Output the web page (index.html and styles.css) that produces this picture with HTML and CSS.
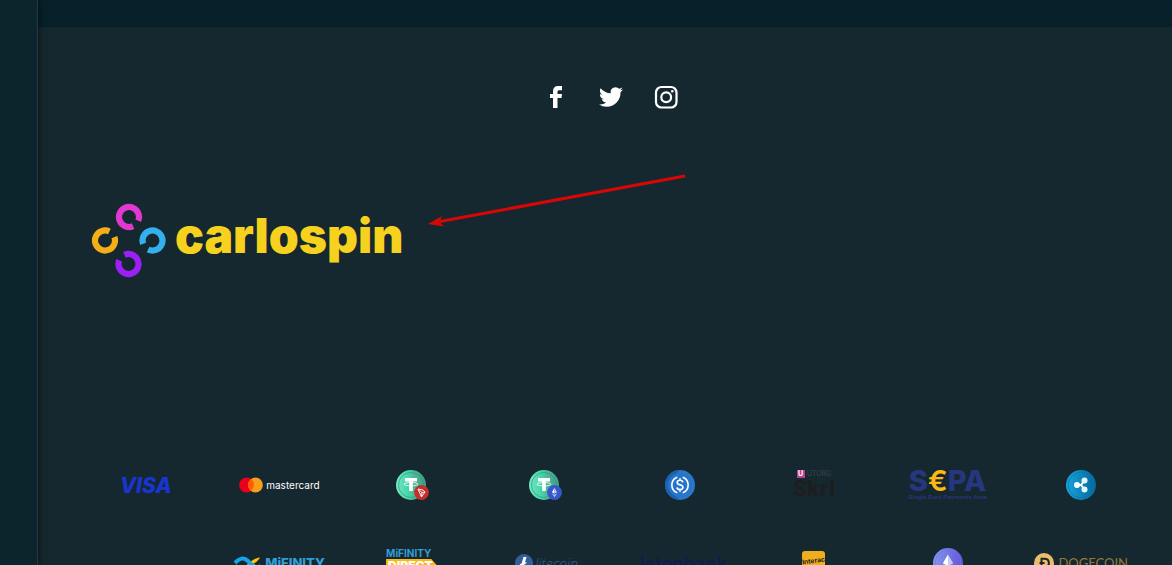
FILE: index.html
```html
<!DOCTYPE html>
<html lang="en">
<head>
  <meta charset="UTF-8" />
  <meta name="viewport" content="width=device-width, initial-scale=1.0"/>
  <title>Carlospin</title>
  <link rel="stylesheet" href="styles.css">
</head>
<body>

  <aside class="sidebar"></aside>

  <div class="page">
    <div class="topbar"></div>

    <footer class="footer">
      <nav class="social">
        <a href="#" aria-label="Facebook">
          <svg width="24" height="24" viewBox="0 0 24 24"><path fill="#fff" d="M9 23V13H6V9h3V6.200C9 3 10.800 1 14 1h4v4.200h-2.600c-1.500 0-1.900.6-1.900 1.800v2H18l-.5 4h-4v10z"/></svg>
        </a>
        <a href="#" aria-label="Twitter">
          <svg width="24" height="24" viewBox="0 0 24 24"><path fill="#fff" d="M23.950 4.570a10 10 0 0 1-2.820.77 4.960 4.960 0 0 0 2.160-2.720c-.95.55-2 .95-3.130 1.180a4.920 4.920 0 0 0-8.380 4.480C7.690 8.090 4.070 6.130 1.640 3.160a4.820 4.820 0 0 0-.67 2.480c0 1.710.87 3.210 2.190 4.100a4.900 4.900 0 0 1-2.230-.62v.06a4.920 4.920 0 0 0 3.950 4.830 5 5 0 0 1-2.210.08 4.940 4.940 0 0 0 4.600 3.420A9.870 9.870 0 0 1 0 19.540a14 14 0 0 0 7.550 2.210c9.050 0 14-7.500 14-13.980 0-.21 0-.42-.02-.63a9.940 9.940 0 0 0 2.420-2.570z"/></svg>
        </a>
        <a href="#" aria-label="Instagram">
          <svg width="24" height="24" viewBox="0 0 24 24" fill="none" stroke="#fff" stroke-width="2.200"><rect x="2" y="2" width="20.500" height="20.500" rx="5.500"/><circle cx="12.200" cy="12.200" r="4.900"/><circle cx="18.300" cy="6.200" r="1.300" fill="#fff" stroke="none"/></svg>
        </a>
      </nav>

      <a href="#" class="logo">
        <svg width="76" height="76" viewBox="0 0 76 76" fill="none" stroke-width="6.200" stroke-dasharray="54.800 8.200">
          <circle cx="38" cy="14" r="10" stroke="#e238cf" transform="rotate(66 38 14)"/>
          <circle cx="14" cy="37.500" r="10" stroke="#f3ae18" transform="rotate(-20 14 37.500)"/>
          <circle cx="61.500" cy="37.500" r="10" stroke="#34b0ee" transform="rotate(160 61.500 37.500)"/>
          <circle cx="37.500" cy="61" r="10" stroke="#9b1ff6" transform="rotate(246 37.500 61)"/>
        </svg>
        <span>carlospin</span>
      </a>

      <svg class="arrow" width="262" height="56" viewBox="0 0 262 56">
        <path d="M14 49.500L259 4" stroke="#d90606" stroke-width="3" fill="none"/>
        <path d="M2 52L16 44L13.500 49.700L18 54.500Z" fill="#d90606"/>
      </svg>

      <ul class="payments">
        <li><span class="visa">VISA</span></li>
        <li class="mastercard">
          <svg width="24" height="16" viewBox="0 0 24 16">
            <circle cx="7.500" cy="8" r="7.400" fill="#eb001b"/>
            <circle cx="16.500" cy="8" r="7.400" fill="#f79e1b"/>
            <path d="M12 2.100a7.400 7.400 0 0 1 0 11.800a7.400 7.400 0 0 1 0-11.800z" fill="#ff5f00"/>
          </svg>
          <span>mastercard</span>
        </li>
        <li>
          <svg width="35" height="30" viewBox="0 0 35 30">
            <defs>
              <linearGradient id="tether"><stop offset="0" stop-color="#74e8c4"/><stop offset=".5" stop-color="#3ecfa4"/><stop offset=".55" stop-color="#55b99c"/><stop offset="1" stop-color="#3f9e84"/></linearGradient>
            </defs>
            <circle cx="15" cy="15" r="15" fill="url(#tether)"/>
            <circle cx="15" cy="15" r="12.500" fill="none" stroke="#2e9a7b" stroke-width=".7"/>
            <path d="M9 8h12v3.500h-4.200v9.500h-3.600v-9.500H9z" fill="#fff"/>
            <ellipse cx="15" cy="14.200" rx="7" ry="1.700" fill="none" stroke="#fff" stroke-width=".8"/>
            <circle cx="25.500" cy="22.500" r="7.400" fill="#c3302d"/>
            <path d="M22 19l5 1 2 2-3.500 5zM22 19l4 3.500 3-.5M26 22.500l-.5 4" fill="none" stroke="#fff" stroke-width=".9"/>
          </svg>
        </li>
        <li>
          <svg width="35" height="30" viewBox="0 0 35 30">
            <circle cx="15" cy="15" r="15" fill="url(#tether)"/>
            <circle cx="15" cy="15" r="12.500" fill="none" stroke="#2e9a7b" stroke-width=".7"/>
            <path d="M9 8h12v3.500h-4.200v9.500h-3.600v-9.500H9z" fill="#fff"/>
            <ellipse cx="15" cy="14.200" rx="7" ry="1.700" fill="none" stroke="#fff" stroke-width=".8"/>
            <circle cx="25.500" cy="22.500" r="7.400" fill="#3658c8"/>
            <path d="M25.500 17.800l-2.600 4.500 2.600 1.500z" fill="#fff"/>
            <path d="M25.500 17.800l2.600 4.500-2.600 1.500zM22.900 23.400l2.600 3.900 2.600-3.900-2.600 1.400z" fill="#b8c6f2"/>
          </svg>
        </li>
        <li>
          <svg width="30" height="30" viewBox="0 0 30 30">
            <circle cx="15" cy="15" r="15" fill="#2b78cb"/>
            <path d="M15 0a15 15 0 0 0 0 30l-6-6a11 11 0 0 1 0-18z" fill="#1c61ad"/>
            <circle cx="15" cy="15" r="12" fill="#2775ca"/>
            <path d="M12.300 7.200a8.300 8.300 0 0 0 0 15.600M17.700 7.200a8.300 8.300 0 0 1 0 15.600" fill="none" stroke="#fff" stroke-width="1.600"/>
            <path d="M17.800 12.300c-.2-1.300-1.200-2-2.800-2-1.700 0-2.800.8-2.800 2.100 0 3.200 5.700 1.700 5.700 4.900 0 1.400-1.100 2.300-2.900 2.300s-2.900-.8-3-2.200M15 8.300v2M15 19.500v2.200" fill="none" stroke="#fff" stroke-width="1.600"/>
          </svg>
        </li>
        <li class="skrill">
          <span class="utorg"><b>U</b>UTORG</span>
          <span>Skrl</span>
        </li>
        <li class="sepa">
          <span class="sepa-name">S<i>€</i>PA</span>
          <span class="sepa-note">Single Euro Payments Area</span>
        </li>
        <li>
          <svg width="30" height="30" viewBox="0 0 30 30">
            <defs>
              <linearGradient id="ripple"><stop offset="0" stop-color="#16a5dd"/><stop offset="1" stop-color="#03669b"/></linearGradient>
            </defs>
            <circle cx="15" cy="15" r="15" fill="url(#ripple)"/>
            <circle cx="15" cy="15" r="12.800" fill="none" stroke="#0b74a8" stroke-width=".7"/>
            <path d="M11 15h4l3.500-4.500M15 15l3.500 4.500" fill="none" stroke="#fff" stroke-width="2"/>
            <circle cx="11" cy="15" r="3" fill="#fff"/>
            <circle cx="18.500" cy="10.500" r="3" fill="#e4f2fa"/>
            <circle cx="18.500" cy="19.500" r="3" fill="#e4f2fa"/>
          </svg>
        </li>

        <li class="mifinity">
          <svg width="28" height="14" viewBox="0 0 28 14" fill="none">
            <path d="M12 10c4-4 7-7.500 14-8.500-2 4-6 6-11 9" fill="#ffc20e"/>
            <path d="M1 7c4-5 9-6 13-2 4 5 8 8 13 5" stroke="#12a5e8" stroke-width="4"/>
            <path d="M2 9c4 5 9 4 12 0" stroke="#ffc20e" stroke-width="2"/>
          </svg>
          <span>MiFINITY</span>
        </li>
        <li class="direct">
          <span class="direct-top">MiFINITY</span>
          <span class="direct-tag">DIRECT</span>
        </li>
        <li class="litecoin">
          <svg width="18" height="18" viewBox="0 0 18 18">
            <circle cx="9" cy="9" r="9" fill="#345d9d"/>
            <path d="M8.500 3h3L10 8.500l1.700-.6-.5 1.700-1.700.7-.7 2.600h4.700l-.6 2.100H5.100l1-3.700-1.500.6.500-1.800 1.500-.6z" fill="#fff"/>
          </svg>
          <span>litecoin</span>
        </li>
        <li><span class="jeton">Jetonbank</span></li>
        <li><span class="interac"><span>Interac</span></span></li>
        <li>
          <svg width="30" height="30" viewBox="0 0 30 30">
            <defs>
              <linearGradient id="ether"><stop offset="0" stop-color="#8199ee"/><stop offset="1" stop-color="#6554d8"/></linearGradient>
            </defs>
            <circle cx="15" cy="15" r="15" fill="url(#ether)"/>
            <circle cx="15" cy="15" r="12.800" fill="none" stroke="#6e74dd" stroke-width=".7"/>
            <path d="M15 6.500L9.800 15.200 15 18.200z" fill="#fff"/>
            <path d="M15 6.500l5.200 8.700-5.200 3z" fill="#c5c9f6"/>
            <path d="M9.800 16.500L15 23.500l5.200-7-5.200 3z" fill="#e5e7fc"/>
          </svg>
        </li>
        <li class="dogecoin">
          <svg width="20" height="20" viewBox="0 0 20 20">
            <circle cx="10" cy="10" r="10" fill="#e9bd6b"/>
            <path d="M7.500 5.800h2.700c3 0 4.700 1.600 4.700 4.200s-1.700 4.200-4.700 4.200H7.500zM5.500 10h5" fill="none" stroke="#1f2624" stroke-width="2"/>
          </svg>
          <span>DOGECOIN</span>
        </li>
      </ul>
    </footer>
  </div>

</body>
</html>
```
FILE: styles.css
```css
* {
  box-sizing: border-box;
}

body {
  margin: 0;
  height: 100vh;
  display: flex;
  overflow: hidden;
  background: #16282f;
  font-family: Inter, sans-serif;
}

.sidebar {
  flex: 0 0 38px;
  background: #0c242b;
  border-right: 1px solid #1d3b41;
  box-shadow: 0 0 8px rgba(0, 0, 0, 0.7);
  z-index: 1;
}

.page {
  flex: 1;
  min-width: 0;
}

.topbar {
  height: 27px;
  background: #07212b;
}

.footer {
  position: relative;
  padding: 58px 24px 0 41px;
}

.social {
  display: flex;
  justify-content: center;
  gap: 31px;
  margin-right: 6px;
}

.social svg,
.payments svg,
.logo svg {
  display: block;
}

.logo {
  display: flex;
  width: fit-content;
  gap: 8px;
  margin: 94px 0 0 12px;
  color: #f6d21f;
  font-size: 48px;
  font-weight: 900;
  line-height: 66px;
  text-decoration: none;
}

/* red pointer over the footer */
.arrow {
  position: absolute;
  left: 388px;
  top: 145px;
}

.payments {
  display: grid;
  grid-template-columns: repeat(8, 1fr);
  grid-auto-rows: 30px;
  row-gap: 48px;
  margin: 191px 0 0;
  padding: 0;
  list-style: none;
}

.payments li {
  display: flex;
  align-items: center;
  justify-content: center;
  white-space: nowrap;
}

.visa {
  color: #1a35cf;
  font-size: 21px;
  font-style: italic;
  font-weight: 800;
}

.mastercard {
  gap: 3px;
  color: #fff;
  font-size: 10px;
  line-height: 12px;
}

.payments .skrill,
.payments .sepa,
.payments .direct {
  flex-direction: column;
}

.skrill {
  color: #1c1f21;
  font-size: 21px;
  font-weight: 900;
  line-height: 22px;
}

.utorg {
  display: flex;
  align-items: center;
  gap: 2px;
  color: #3a464b;
  font-size: 7px;
  font-weight: 400;
  line-height: 8px;
}

.utorg b {
  width: 8px;
  background: #b8408f;
  color: #fff;
  text-align: center;
}

.sepa {
  color: #26367f;
}

.sepa-name {
  font-size: 29px;
  font-weight: 800;
  line-height: 24px;
}

.sepa-name i {
  color: #fdb913;
  font-style: normal;
  font-weight: 600;
}

.sepa-note {
  font: bold 6px/8px "Liberation Sans", sans-serif;
}

.payments .mifinity {
  grid-column: 2;
  gap: 3px;
  color: #2f9fd8;
  font-size: 13px;
  font-weight: 800;
}

.payments .direct {
  align-items: flex-start;
  width: 54px;
  justify-self: center;
}

.direct-top {
  color: #2f9fd8;
  font-size: 10px;
  font-weight: 700;
  line-height: 11px;
}

.direct-tag {
  width: 52px;
  padding: 0 2px 6px;
  background: #fdb913;
  clip-path: polygon(0 0, 86% 0, 100% 40%, 100% 100%, 0 100%);
  color: #fff;
  font-size: 12px;
  font-weight: 900;
  line-height: 14px;
}

.litecoin {
  gap: 2px;
  color: #345d9d;
  font: italic 300 14px "Open Sans", sans-serif;
}

.jeton {
  color: #111c4c;
  font-size: 18px;
  font-weight: 600;
}

.interac {
  width: 23px;
  height: 25px;
  border-radius: 3px;
  background: #f0ae1e;
  color: #1c1a14;
  font: bold 7px/20px "Liberation Sans", sans-serif;
  text-align: center;
}

.interac span {
  display: block;
  transform: rotate(-8deg);
}

.dogecoin {
  gap: 4px;
  color: #93773f;
  font: 13px Lato, sans-serif;
}
```
